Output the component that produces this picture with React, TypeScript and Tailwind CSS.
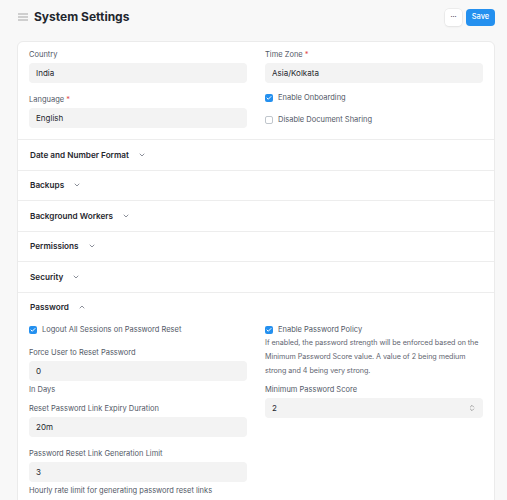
import { ChevronDown, ChevronUp, ChevronsUpDown, Check } from "lucide-react";

const font = { fontFamily: "Inter, 'Noto Sans', sans-serif" };

function Label({ text, required }: { text: string; required?: boolean }) {
  return (
    <div className="text-[7.5px] leading-[10px] text-[#525866]">
      {text}
      {required && <span className="text-[#e24c4c]"> *</span>}
    </div>
  );
}

function Input({ value, select }: { value: string; select?: boolean }) {
  return (
    <div className="mt-[3px] flex h-[20px] items-center justify-between rounded-[4px] bg-[#f3f3f3] px-[7px] text-[8px] text-[#1f272e]">
      <span>{value}</span>
      {select && <ChevronsUpDown className="h-[8px] w-[8px] text-[#7c7c7c]" strokeWidth={2} />}
    </div>
  );
}

function Checkbox({ label, checked }: { label: string; checked?: boolean }) {
  return (
    <div className="flex items-center gap-[5px] text-[7.5px] leading-[10px] text-[#525866]">
      {checked ? (
        <span className="flex h-[8px] w-[8px] items-center justify-center rounded-[2px] bg-[#2490ef]">
          <Check className="h-[6px] w-[6px] text-white" strokeWidth={4} />
        </span>
      ) : (
        <span className="h-[8px] w-[8px] rounded-[2px] border border-[#c0c6cc] bg-white" />
      )}
      <span>{label}</span>
    </div>
  );
}

function Section({ title, open }: { title: string; open?: boolean }) {
  return (
    <div className="flex h-[30.5px] items-center gap-[9px] border-t border-[#ededed] px-[12px]">
      <span className="text-[8.2px] font-semibold text-[#1f272e]">{title}</span>
      {open ? (
        <ChevronUp className="h-[8px] w-[8px] text-[#525866]" strokeWidth={2} />
      ) : (
        <ChevronDown className="h-[8px] w-[8px] text-[#525866]" strokeWidth={2} />
      )}
    </div>
  );
}

export default function App() {
  return (
    <div className="h-[500px] w-[507px] overflow-hidden bg-[#f8f8f8]" style={font}>
      {/* Page header */}
      <div className="flex h-[41px] items-center justify-between pl-[18px] pr-[12px] pb-[9px] pt-[2px]">
        <div className="flex items-center gap-[6px]">
          <svg width="10" height="8" viewBox="0 0 10 8" className="text-[#a5a5a5]">
            <path d="M0 1h10M0 4h10M0 7h10" stroke="currentColor" strokeWidth="1.2" />
          </svg>
          <span className="text-[12px] font-bold text-[#1f272e]">System Settings</span>
        </div>
        <div className="flex items-center gap-[4px]">
          <div className="flex h-[17px] w-[17px] items-center justify-center rounded-[4px] bg-white text-[7px] text-[#1f272e] shadow-[0_0_0_0.5px_#e2e2e2,0_1px_2px_rgba(0,0,0,0.08)]">
            ···
          </div>
          <div className="flex h-[17px] w-[29px] items-center justify-center rounded-[4px] bg-[#2490ef] text-[7.5px] font-medium text-white">
            Save
          </div>
        </div>
      </div>

      {/* Card */}
      <div className="ml-[17px] mr-[12px] rounded-[6px] border border-[#ebebeb] bg-white">
        <div className="grid h-[97px] grid-cols-2 gap-[18px] px-[11px] pt-[8px]">
          <div>
            <Label text="Country" />
            <Input value="India" />
            <div className="mt-[12px]">
              <Label text="Language" required />
              <Input value="English" />
            </div>
          </div>
          <div>
            <Label text="Time Zone" required />
            <Input value="Asia/Kolkata" />
            <div className="mt-[10px]">
              <Checkbox label="Enable Onboarding" checked />
            </div>
            <div className="mt-[12px]">
              <Checkbox label="Disable Document Sharing" />
            </div>
          </div>
        </div>

        <Section title="Date and Number Format" />
        <Section title="Backups" />
        <Section title="Background Workers" />
        <Section title="Permissions" />
        <Section title="Security" />
        <Section title="Password" open />

        <div className="grid grid-cols-2 gap-[18px] px-[11px] pb-[20px] pt-[3px]">
          <div>
            <Checkbox label="Logout All Sessions on Password Reset" checked />
            <div className="mt-[13px]">
              <Label text="Force User to Reset Password" />
              <Input value="0" />
              <div className="mt-[4px] text-[7.5px] leading-[10px] text-[#525866]">In Days</div>
            </div>
            <div className="mt-[9px]">
              <Label text="Reset Password Link Expiry Duration" />
              <Input value="20m" />
            </div>
            <div className="mt-[12px]">
              <Label text="Password Reset Link Generation Limit" />
              <Input value="3" />
              <div className="mt-[4px] text-[7.5px] leading-[10px] text-[#525866]">
                Hourly rate limit for generating password reset links
              </div>
            </div>
          </div>
          <div>
            <Checkbox label="Enable Password Policy" checked />
            <p className="mt-[1px] text-[7.2px] leading-[14px] tracking-[-0.05px] text-[#5f6570]">
              If enabled, the password strength will be enforced based on the Minimum Password Score value. A value
              of 2 being medium strong and 4 being very strong.
            </p>
            <div className="mt-[7px]">
              <Label text="Minimum Password Score" />
              <Input value="2" select />
            </div>
          </div>
        </div>
      </div>
    </div>
  );
}
